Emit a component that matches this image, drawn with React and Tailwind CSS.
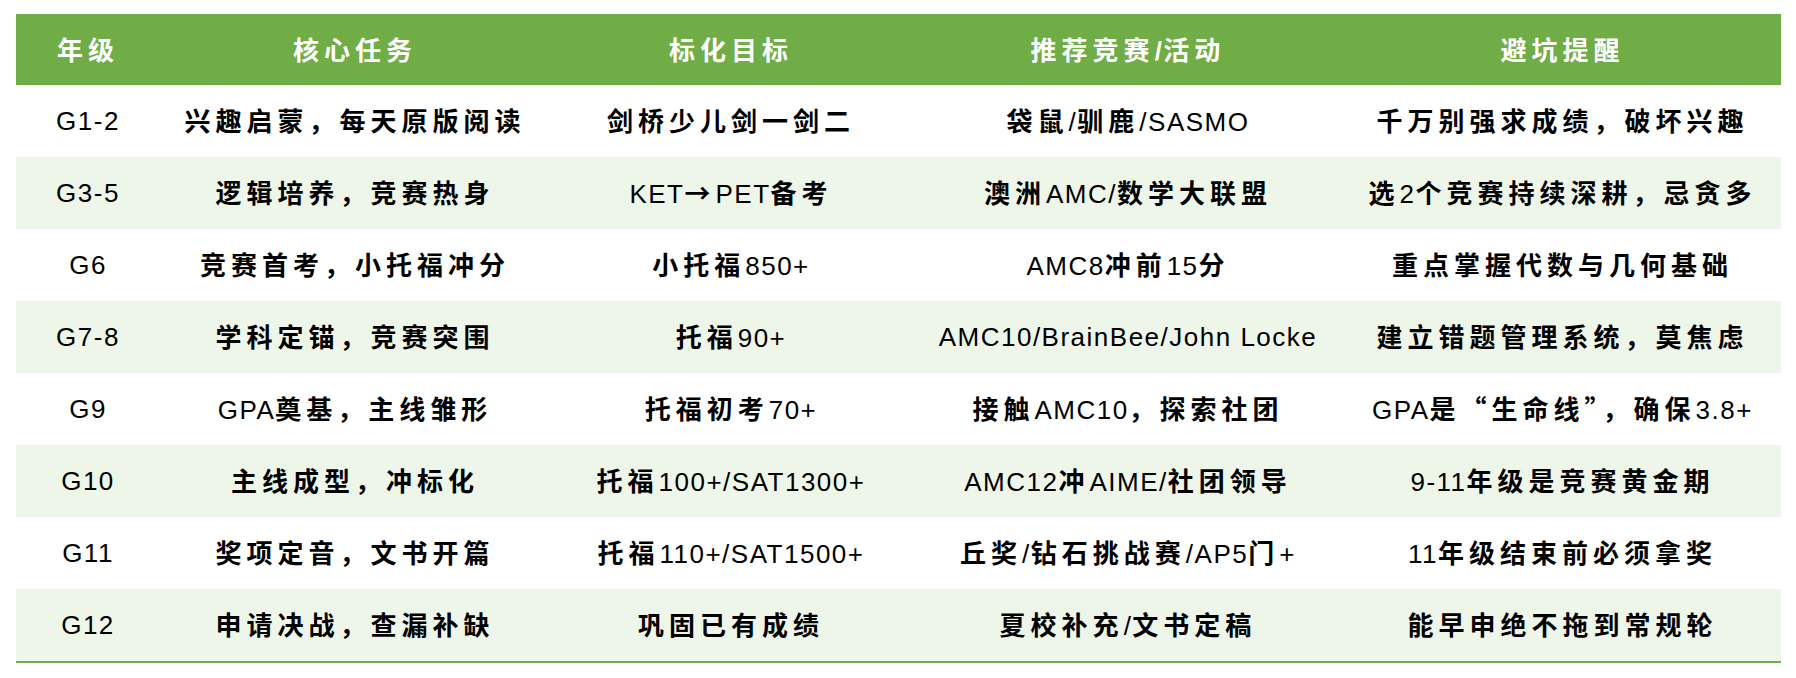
const columns = ["年级", "核心任务", "标化目标", "推荐竞赛/活动", "避坑提醒"];

const rows = [
  ["G1-2", "兴趣启蒙，每天原版阅读", "剑桥少儿剑一剑二", "袋鼠/驯鹿/SASMO", "千万别强求成绩，破坏兴趣"],
  ["G3-5", "逻辑培养，竞赛热身", "KET→PET备考", "澳洲AMC/数学大联盟", "选2个竞赛持续深耕，忌贪多"],
  ["G6", "竞赛首考，小托福冲分", "小托福850+", "AMC8冲前15分", "重点掌握代数与几何基础"],
  ["G7-8", "学科定锚，竞赛突围", "托福90+", "AMC10/BrainBee/John Locke", "建立错题管理系统，莫焦虑"],
  ["G9", "GPA奠基，主线雏形", "托福初考70+", "接触AMC10，探索社团", "GPA是“生命线”，确保3.8+"],
  ["G10", "主线成型，冲标化", "托福100+/SAT1300+", "AMC12冲AIME/社团领导", "9-11年级是竞赛黄金期"],
  ["G11", "奖项定音，文书开篇", "托福110+/SAT1500+", "丘奖/钻石挑战赛/AP5门+", "11年级结束前必须拿奖"],
  ["G12", "申请决战，查漏补缺", "巩固已有成绩", "夏校补充/文书定稿", "能早申绝不拖到常规轮"],
];

// CJK runs get the CJK face and wider tracking, latin stays tighter
const cjk = /([\u2018-\u201f\u2190-\u21ff\u3000-\u9fff\uff00-\uffef]+)/;

function Mixed({ text, head }) {
  return text.split(cjk).map((part, i) =>
    i % 2 === 1 ? (
      <span
        key={i}
        className={
          (head ? "tracking-[5px] " : "tracking-[5px] font-semibold ") +
          "font-['Noto_Sans_CJK_SC','Liberation_Sans',sans-serif]"
        }
      >
        {part}
      </span>
    ) : (
      <span key={i} className="tracking-[1.5px]">
        {part}
      </span>
    )
  );
}

export default function App() {
  return (
    <div className="h-[678px] w-[1796px] bg-white pl-[16px] pt-[14px] font-['Liberation_Sans','Noto_Sans_CJK_SC',sans-serif] text-[26px] text-black">
      <div className="w-[1765px] border-b-2 border-[#70ad47]">
        <div className="grid h-[71px] grid-cols-[144px_390px_362px_432px_437px] items-center bg-[#70ad47] font-bold text-white">
          {columns.map((c) => (
            <div key={c} className="text-center">
              <Mixed text={c} head />
            </div>
          ))}
        </div>
        {rows.map((row, r) => (
          <div
            key={row[0]}
            className={
              "grid h-[72px] grid-cols-[144px_390px_362px_432px_437px] items-center " +
              (r % 2 === 1 ? "bg-[#eef6e9]" : "bg-white")
            }
          >
            {row.map((cell, i) => (
              <div key={i} className="whitespace-nowrap text-center">
                <Mixed text={cell} />
              </div>
            ))}
          </div>
        ))}
      </div>
    </div>
  );
}
